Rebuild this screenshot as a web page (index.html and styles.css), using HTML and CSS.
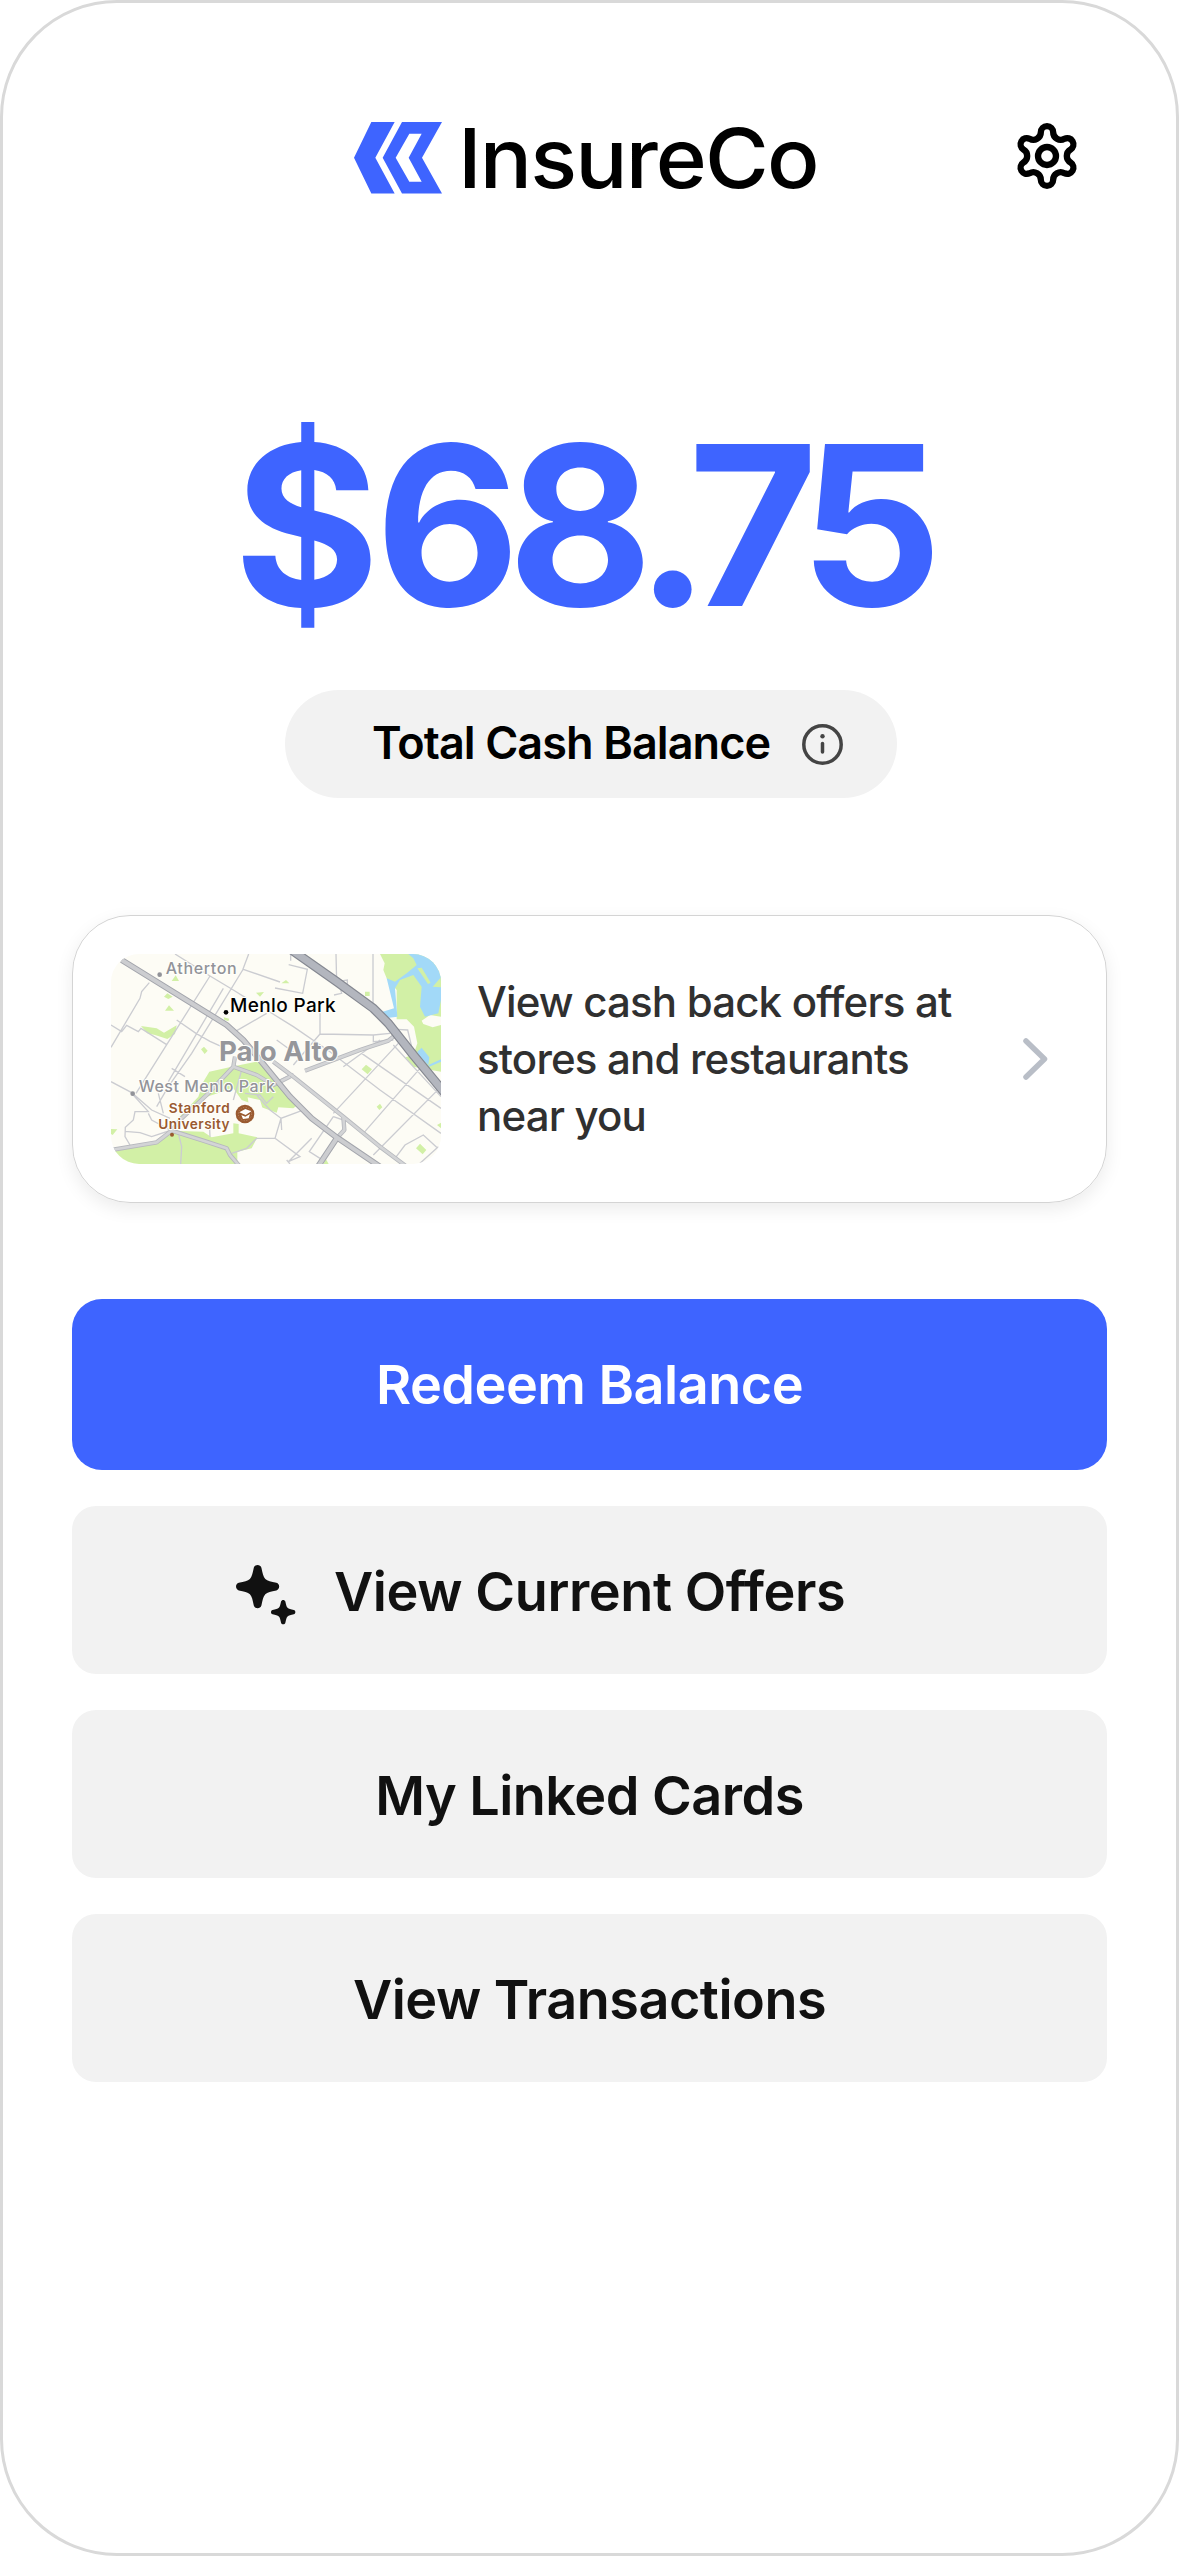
FILE: index.html
```html
<!DOCTYPE html>
<html lang="en">
<head>
<meta charset="utf-8">
<title>InsureCo</title>
<link rel="stylesheet" href="styles.css">
</head>
<body>
<main class="screen">
  <header class="header">
    <div class="brand">
      <svg class="brand-mark" viewBox="72 66 264 214">
        <path d="M124 66H194L136 173L194 280H124L72 173Z"/>
        <path fill-rule="evenodd" d="M216 66H336L276 173L336 280H216L158 173ZM238 101L197 173L238 245H275L236 173L275 101Z"/>
      </svg>
      <span class="brand-name">InsureCo</span>
    </div>
    <svg class="gear" viewBox="-99 -99 198 198">
      <path d="M-18.5-71A18.5 18.5 0 0 1 18.5-71A22.5 22.5 0 0 0 52.2-51.5A18.5 18.5 0 0 1 70.7-19.5A22.5 22.5 0 0 0 70.7 19.5A18.5 18.5 0 0 1 52.2 51.5A22.5 22.5 0 0 0 18.5 71A18.5 18.5 0 0 1-18.5 71A22.5 22.5 0 0 0-52.2 51.5A18.5 18.5 0 0 1-70.7 19.5A22.5 22.5 0 0 0-70.7-19.5A18.5 18.5 0 0 1-52.2-51.5A22.5 22.5 0 0 0-18.5-71Z"/>
      <circle r="27"/>
    </svg>
  </header>

  <section class="balance">
    <div class="amount"><span class="currency">$</span>68<span class="cents">.75</span></div>
    <div class="pill">
      <span class="pill-label">Total Cash Balance</span>
      <svg class="info" viewBox="0 0 41 41">
        <circle cx="20.5" cy="20.5" r="18.7"/>
        <path d="M20.5 19.6V28"/>
        <circle class="info-dot" cx="20.5" cy="12.3" r="2.2"/>
      </svg>
    </div>
  </section>

  <section class="offer">
    <svg class="map" viewBox="153 162 990 630">
      <g class="park">
        <path d="M960 162H1143V515L1100 508L1060 500L1036 472L1060 465L1072 430L1062 380L1040 358L1010 358V270L980 235L970 210L974 190Z"/>
        <path d="M153 755L300 725L340 692L430 695L455 712L520 700V670L536 672V700L592 712L575 745L532 755V792H153Z"/>
        <path d="M350 660L415 590L430 545L448 515L515 500L590 485L640 520L665 560L720 610L700 625L655 622L650 638L545 600L520 565L440 590L375 650Z"/>
        <path d="M243 378L290 385L312 398L350 376L345 402L322 417L285 405L262 400Z"/>
        <path d="M335 243L347 226L357 243ZM312 290L322 280L338 290L325 297ZM315 332L327 316L342 332ZM664 250L678 240L688 250ZM588 278L600 290L612 276ZM915 275H929V288H915ZM491 352L508 356L505 363L493 360ZM423 448L432 440L443 452L434 462ZM905 508L918 494L936 508L923 523ZM950 620L960 611L967 622L958 630ZM1068 745L1080 731L1099 750L1088 763ZM1131 675L1143 668V685ZM153 687L172 688L158 705L153 702ZM790 792L798 778L806 792Z"/>
      </g>
      <path class="land" d="M1085 362L1110 345L1143 350V375L1118 382L1090 372ZM563 592L600 600L612 640L595 668L570 640Z"/>
      <g class="water">
        <path d="M1045 162H1143V300L1135 340L1095 350L1080 320L1085 260L1060 225L1020 240L1005 265L1012 350L975 355L968 335L1002 325L980 235L1005 245L1040 220L1070 195L1060 175Z"/>
        <path d="M1072 455L1085 443L1108 472L1105 495L1075 470ZM1105 495L1143 478V485L1108 500Z"/>
      </g>
      <path class="park" d="M1072 205L1085 203L1112 248L1104 252ZM1118 260L1143 232V262Z"/>
      <g class="street">
        <path d="M345 162L450 228L520 270L560 295M566 162L548 210L395 460L325 560L290 620M450 228L228 580M268 248L245 275L240 295L153 442M490 265L325 545M408 400L450 424L485 440M350 360L408 400M153 375L185 395L200 376L235 395L243 385L320 434M550 208L660 246M686 194L742 208L728 280L645 264M692 165V182M828 162L830 245L862 240V256L840 262L845 280L822 285M939 162V340M780 340V402L940 405L990 400M940 405V425L1000 420M1010 388L1043 390L1055 440M620 330L700 380L810 455L960 570L1143 700M525 395L620 340M780 402L700 495M650 420L712 465M153 545L215 578L275 630L330 655M295 580L310 640M215 580L265 635L225 635L220 660L196 682L195 710L210 735M195 694L240 698L275 710L335 690M265 640L275 660L330 690M355 700L365 740L362 792M450 710L448 660M515 760L560 745L590 715H645L663 655L725 632M545 510L520 600M555 580L600 585L620 610L640 590M590 585L630 630L663 655L665 690M645 715L720 770L685 785L755 715M680 780L690 792M335 505L375 530M905 460L1143 625M1015 430L820 640M1080 505L910 700M1143 560L940 765M1000 435L1143 590M850 500L960 420M1135 740L1080 790M1130 742L1090 705L1035 735L1005 775M820 650L748 755L780 775M820 650L850 660M650 545L700 520"/>
      </g>
      <path class="arterial-edge" d="M735 512L900 450L985 422L1010 402M520 500L590 525L640 555L690 530M525 470L520 500L440 585L365 655L335 692M640 485L700 530L850 650L960 740L1040 800M850 650L853 690L830 715M153 750L290 727L335 692L430 722L500 745L510 765L540 800"/>
      <path class="arterial" d="M735 512L900 450L985 422L1010 402M520 500L590 525L640 555L690 530M525 470L520 500L440 585L365 655L335 692M640 485L700 530L850 650L960 740L1040 800M850 650L853 690L830 715M153 750L290 727L335 692L430 722L500 745L510 765L540 800"/>
      <path class="main-edge" d="M185 180L500 375L550 420L600 480L690 590L755 655L830 712L960 800M832 712L775 798"/>
      <path class="main" d="M185 180L500 375L550 420L600 480L690 590L755 655L830 712L960 800M832 712L775 798"/>
      <path class="highway-edge" d="M695 150L830 245L940 325L985 370L1060 465L1155 580"/>
      <path class="highway" d="M695 150L830 245L940 325L985 370L1060 465L1155 580"/>
      <g class="place">
        <circle cx="299" cy="224" r="7"/>
        <text x="317" y="222" font-size="48" textLength="213">Atherton</text>
        <circle cx="218" cy="581" r="7"/>
        <text x="236" y="575" font-size="48" textLength="409">West Menlo Park</text>
        <text class="city" x="477" y="483" font-size="83" textLength="358">Palo Alto</text>
      </g>
      <g class="place-current">
        <circle cx="498" cy="337" r="7"/>
        <text x="510" y="335" font-size="57" textLength="317">Menlo Park</text>
      </g>
      <g class="campus">
        <text x="326" y="638" font-size="41" textLength="183">Stanford</text>
        <text x="295" y="687" font-size="41" textLength="214">University</text>
        <circle cx="336" cy="704" r="6"/>
        <circle cx="555" cy="642" r="28"/>
        <circle class="badge-ring" cx="555" cy="642" r="20"/>
        <path class="badge-cap" d="M538 637L556 627L574 634L557 645ZM544 645L556 650L570 642L566 655L549 657Z"/>
      </g>
    </svg>
    <p class="offer-text">View cash back offers at stores and restaurants near&nbsp;you</p>
    <svg class="chevron" viewBox="0 0 25 42"><path d="M3 3L21.5 21L3 39"/></svg>
  </section>

  <nav class="actions">
    <button class="btn btn-primary">Redeem Balance</button>
    <button class="btn btn-offers">
      <svg class="sparkle" viewBox="0 0 60 60">
        <defs>
          <path id="star" d="M-3.800-18.800C-2.800-22.500 2.800-22.500 3.800-18.800C5-13.500 5.600-9.800 7.700-7.700C9.800-5.600 13.500-5 18.800-3.800C22.500-2.800 22.500 2.800 18.800 3.800C13.500 5 9.800 5.600 7.700 7.700C5.600 9.800 5 13.500 3.800 18.800C2.800 22.500-2.800 22.500-3.800 18.800C-5 13.500-5.600 9.800-7.700 7.700C-9.800 5.600-13.500 5-18.800 3.800C-22.500 2.800-22.500-2.800-18.800-3.800C-13.500-5-9.800-5.600-7.700-7.700C-5.600-9.800-5-13.500-3.800-18.800Z"/>
        </defs>
        <use href="#star" transform="translate(21.600 21.600)"/>
        <use href="#star" transform="translate(47.200 47.100) scale(.565)"/>
      </svg>
      <span>View Current Offers</span>
    </button>
    <button class="btn">My Linked Cards</button>
    <button class="btn">View Transactions</button>
  </nav>
</main>
</body>
</html>
```
FILE: styles.css
```css
* { box-sizing: border-box; }
body { margin: 0; background: #fff; font-family: Inter, "Liberation Sans", sans-serif; }
.screen {
  width: 1179px; height: 2556px; padding: 119px 69px 0;
  border: 3px solid #d9d9d9; border-radius: 117px;
  background: #fff; display: flex; flex-direction: column;
}
.header { height: 72px; padding: 0 27px 0 282px; display: flex; justify-content: space-between; align-items: flex-start; }
.brand { display: flex; align-items: center; gap: 16px; height: 72px; }
.brand-mark { width: 88px; height: 71.5px; fill: #3e64ff; }
.brand-name {
  font-size: 82.5px; line-height: 72px; font-weight: 500; letter-spacing: -1.8px; color: #000; white-space: nowrap;
  transform: scaleX(1.055); transform-origin: left;
}
.gear { width: 66px; height: 66px; margin-top: 1px; fill: none; stroke: #000; stroke-width: 19; }
.balance { display: flex; flex-direction: column; align-items: center; margin-top: 203px; }
.amount { font-size: 223px; line-height: 256px; height: 293px; margin-right: 19px; font-weight: 700; letter-spacing: -12.4px; color: #3e64ff; white-space: nowrap; }
.currency { letter-spacing: -4.4px; }
.cents { margin-left: -5px; letter-spacing: -16px; }
.pill {
  width: 612px; height: 108px; border-radius: 54px; background: #f2f2f2; margin-left: 3px;
  display: flex; align-items: center; gap: 32px; padding-left: 87px;
}
.pill-label { margin-top: -3px; font-size: 45px; font-weight: 600; letter-spacing: -.92px; color: #000; white-space: nowrap; }
.info { width: 41px; height: 41px; fill: none; stroke: #444; stroke-width: 3.5; stroke-linecap: round; }
.info-dot { fill: #444; stroke: none; }
.offer {
  margin-top: 117px; height: 288px; border: 1px solid #d4d4d4; border-radius: 58px;
  box-shadow: 0 6px 18px rgba(0, 0, 0, .08); padding: 0 58px 0 38px;
  display: flex; align-items: center;
}
.map { width: 330px; height: 210px; border-radius: 28px; background: #fdfcf5; flex: none; }
.park { fill: #d2f0a6; }
.land { fill: #fdfcf5; }
.water { fill: #a2d9f8; }
.street { fill: none; stroke: #cbccd1; stroke-width: 4; }
.arterial-edge { fill: none; stroke: #b6b8bd; stroke-width: 13; stroke-linejoin: round; }
.arterial { fill: none; stroke: #d3d4d6; stroke-width: 8; stroke-linejoin: round; }
.main-edge { fill: none; stroke: #a3a5ac; stroke-width: 18; stroke-linejoin: round; }
.main { fill: none; stroke: #cccdd0; stroke-width: 12; stroke-linejoin: round; }
.highway-edge { fill: none; stroke: #858891; stroke-width: 28; }
.highway { fill: none; stroke: #b3b6be; stroke-width: 21; }
.map text { paint-order: stroke; stroke: #fffffb; stroke-width: 6; stroke-linejoin: round; }
.place { fill: #929399; font-weight: 500; }
.city { fill: #96979b; font-weight: 700; }
.place-current { fill: #000; font-weight: 500; }
.campus { fill: #9a5a30; font-weight: 600; }
.badge-ring { fill: none; stroke: #c69b7d; stroke-width: 2; stroke-dasharray: 3 5; }
.badge-cap { fill: #fff; }
.offer-text { margin: -2px 0 0 36px; width: 500px; font-size: 42px; line-height: 57px; font-weight: 500; letter-spacing: -.83px; color: #303030; }
.chevron { width: 25px; height: 42px; margin-left: auto; fill: none; stroke: #b9bec7; stroke-width: 5.5; stroke-linecap: round; stroke-linejoin: round; }
.actions { margin-top: 96px; display: flex; flex-direction: column; gap: 36px; }
.btn {
  height: 168px; border: 0; border-radius: 24px; background: #f2f2f2; color: #111; padding: 2px 0 0;
  font: 600 54px Inter, "Liberation Sans", sans-serif; letter-spacing: -.52px;
  display: flex; align-items: center; justify-content: center;
}
.btn-primary { height: 171px; border-radius: 30px; background: #3e64ff; color: #fff; padding: 0; }
.btn-offers { justify-content: flex-start; gap: 38px; padding-left: 164px; letter-spacing: -.42px; }
.sparkle { width: 60px; height: 60px; margin-top: 8px; fill: #111; }
```
